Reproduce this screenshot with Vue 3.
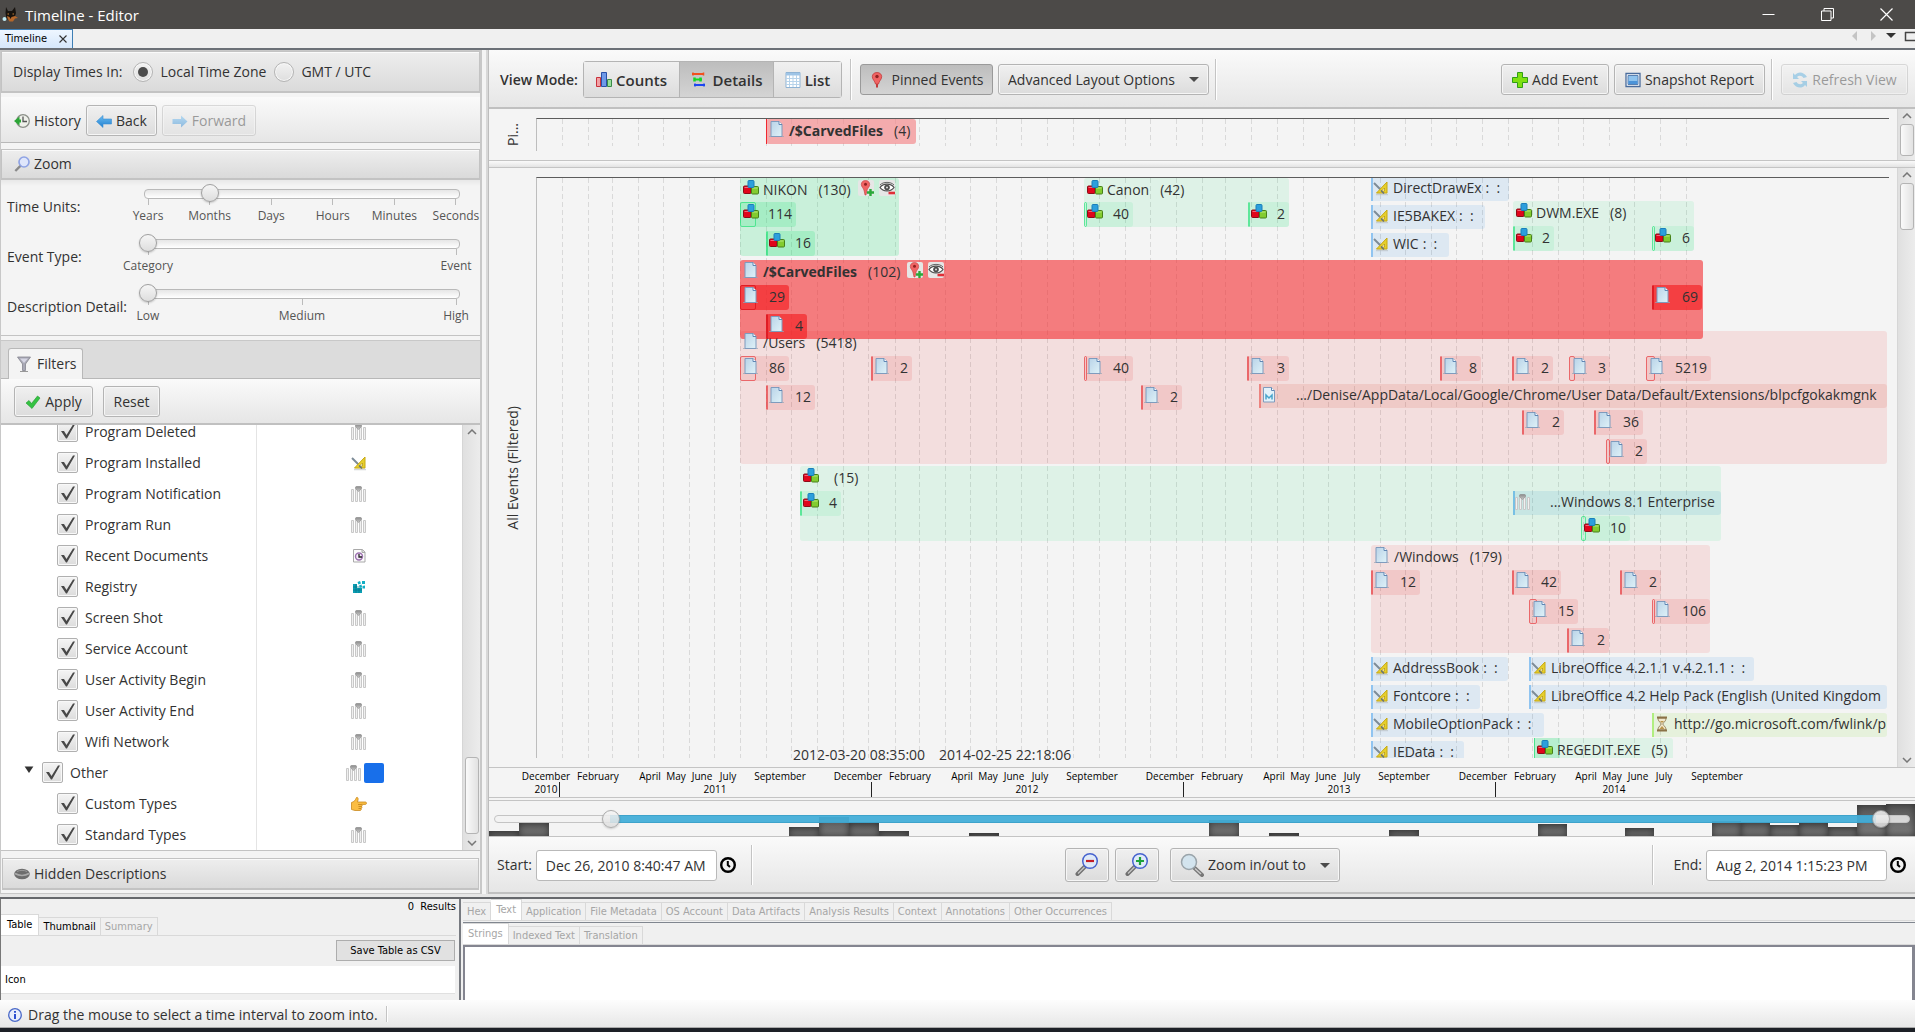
<script setup>
import { ref } from 'vue'

const zone = ref('local')

const sliders = [
  { id: 'units', label: 'Time Units:', max: 5, value: 1, ticks: ['Years', 'Months', 'Days', 'Hours', 'Minutes', 'Seconds'] },
  { id: 'etype', label: 'Event Type:', max: 1, value: 0, ticks: ['Category', 'Event'] },
  { id: 'detail', label: 'Description Detail:', max: 2, value: 0, ticks: ['Low', 'Medium', 'High'] },
]

const filters = [
  { name: 'Program Deleted', icon: 'generic' },
  { name: 'Program Installed', icon: 'tools' },
  { name: 'Program Notification', icon: 'generic' },
  { name: 'Program Run', icon: 'generic' },
  { name: 'Recent Documents', icon: 'recent' },
  { name: 'Registry', icon: 'registry' },
  { name: 'Screen Shot', icon: 'generic' },
  { name: 'Service Account', icon: 'generic' },
  { name: 'User Activity Begin', icon: 'generic' },
  { name: 'User Activity End', icon: 'generic' },
  { name: 'Wifi Network', icon: 'generic' },
  { name: 'Other', icon: 'generic', root: true },
  { name: 'Custom Types', icon: 'hand' },
  { name: 'Standard Types', icon: 'generic' },
]

// month boundaries, measured from the left edge of the plot
const gridLines = [
  25, 51, 75, 101, 126, 152, 177, 203, 229, 254, 280, 306, 331, 358, 382, 408, 433, 459, 484, 510, 536, 562, 588, 613,
  639, 665, 688, 714, 740, 766, 791, 817, 843, 868, 894, 919, 945, 971, 995, 1021, 1046, 1072, 1097, 1123, 1149,
]

const bands = [
  { x: 203, y: 0, w: 159, h: 78, tone: 'green2', icon: 'cubes', label: 'NIKON', count: '(130)', actions: true },
  { x: 547, y: 0, w: 205, h: 49, tone: 'green', icon: 'cubes', label: 'Canon', count: '(42)' },
  { x: 976, y: 23, w: 181, h: 50, tone: 'green', icon: 'cubes', label: 'DWM.EXE', count: '(8)' },
  { x: 203, y: 82, w: 963, h: 79, tone: 'hot', icon: 'page', label: '/$CarvedFiles', count: '(102)', bold: true, actions: true },
  { x: 203, y: 153, w: 1147, h: 133, tone: 'red', icon: 'page', label: '/Users', count: '(5418)' },
  { x: 263, y: 288, w: 921, h: 75, tone: 'green', icon: 'cubes', label: '', count: '(15)' },
  { x: 834, y: 367, w: 339, h: 108, tone: 'red', icon: 'page', label: '/Windows', count: '(179)' },
  { x: 997, y: 560, w: 139, h: 25, tone: 'green', icon: 'cubes', label: 'REGEDIT.EXE', count: '(5)', span: 26 },
]

const chips = [
  { x: 203, y: 24, w: 56, span: 16, n: '114', tone: 'green2', icon: 'cubes' },
  { x: 229, y: 53, w: 49, span: 1, n: '16', tone: 'green2', icon: 'cubes' },
  { x: 547, y: 24, w: 49, span: 3, n: '40', tone: 'green', icon: 'cubes' },
  { x: 711, y: 24, w: 41, span: 1, n: '2', tone: 'green', icon: 'cubes' },
  { x: 976, y: 48, w: 41, span: 1, n: '2', tone: 'green', icon: 'cubes' },
  { x: 1115, y: 48, w: 42, span: 3, n: '6', tone: 'green', icon: 'cubes' },
  { x: 203, y: 107, w: 49, span: 16, n: '29', tone: 'hot', icon: 'page' },
  { x: 229, y: 136, w: 41, span: 1, n: '4', tone: 'hot', icon: 'page' },
  { x: 1115, y: 107, w: 50, span: 2, n: '69', tone: 'hot', icon: 'page' },
  { x: 203, y: 178, w: 49, span: 16, n: '86', tone: 'red', icon: 'page' },
  { x: 334, y: 178, w: 41, span: 2, n: '2', tone: 'red', icon: 'page' },
  { x: 547, y: 178, w: 49, span: 3, n: '40', tone: 'red', icon: 'page' },
  { x: 710, y: 178, w: 42, span: 2, n: '3', tone: 'red', icon: 'page' },
  { x: 903, y: 178, w: 41, span: 2, n: '8', tone: 'red', icon: 'page' },
  { x: 975, y: 178, w: 41, span: 2, n: '2', tone: 'red', icon: 'page' },
  { x: 1032, y: 178, w: 41, span: 6, n: '3', tone: 'red', icon: 'page' },
  { x: 1109, y: 178, w: 65, span: 9, n: '5219', tone: 'red', icon: 'page' },
  { x: 229, y: 207, w: 49, span: 1, n: '12', tone: 'red', icon: 'page' },
  { x: 604, y: 207, w: 41, span: 1, n: '2', tone: 'red', icon: 'page' },
  { x: 985, y: 232, w: 42, span: 2, n: '2', tone: 'red', icon: 'page' },
  { x: 1057, y: 232, w: 49, span: 1, n: '36', tone: 'red', icon: 'page' },
  { x: 1069, y: 261, w: 41, span: 4, n: '2', tone: 'red', icon: 'page' },
  { x: 263, y: 313, w: 41, span: 1, n: '4', tone: 'green', icon: 'cubes' },
  { x: 1044, y: 338, w: 49, span: 5, n: '10', tone: 'green', icon: 'cubes' },
  { x: 834, y: 392, w: 49, span: 2, n: '12', tone: 'red', icon: 'page' },
  { x: 975, y: 392, w: 49, span: 2, n: '42', tone: 'red', icon: 'page' },
  { x: 1083, y: 392, w: 41, span: 1, n: '2', tone: 'red', icon: 'page' },
  { x: 992, y: 421, w: 49, span: 8, n: '15', tone: 'red', icon: 'page' },
  { x: 1115, y: 421, w: 58, span: 3, n: '106', tone: 'red', icon: 'page' },
  { x: 1030, y: 450, w: 42, span: 2, n: '2', tone: 'red', icon: 'page' },
]

const leaves = [
  { x: 834, y: -1, w: 138, text: 'DirectDrawEx', tail: ':  :', tone: 'blue', icon: 'tools' },
  { x: 834, y: 27, w: 114, text: 'IE5BAKEX', tail: ':  :', tone: 'blue', icon: 'tools' },
  { x: 834, y: 55, w: 78, text: 'WIC', tail: ':  :', tone: 'blue', icon: 'tools' },
  { x: 722, y: 206, w: 628, text: '.../Denise/AppData/Local/Google/Chrome/User Data/Default/Extensions/blpcfgokakmgnk', tone: 'coral', icon: 'metadata', wide: true },
  { x: 976, y: 313, w: 208, text: '...Windows 8.1 Enterprise', tone: 'teal', icon: 'generic', wide: true },
  { x: 834, y: 479, w: 137, text: 'AddressBook', tail: ':  :', tone: 'blue', icon: 'tools' },
  { x: 992, y: 479, w: 225, text: 'LibreOffice 4.2.1.1 v.4.2.1.1', tail: ':  :', tone: 'blue', icon: 'tools' },
  { x: 834, y: 507, w: 109, text: 'Fontcore', tail: ':  :', tone: 'blue', icon: 'tools' },
  { x: 992, y: 507, w: 358, text: 'LibreOffice 4.2 Help Pack (English (United Kingdom', tone: 'blue', icon: 'tools' },
  { x: 834, y: 535, w: 173, text: 'MobileOptionPack', tail: ':  :', tone: 'blue', icon: 'tools' },
  { x: 1115, y: 535, w: 235, text: 'http://go.microsoft.com/fwlink/p', tone: 'lime', icon: 'hourglass' },
  { x: 834, y: 563, w: 93, text: 'IEData', tail: ':  :', tone: 'blue', icon: 'tools' },
]

// axis positions are measured from the left edge of the chart pane
const months = [
  [57, 'December'], [109, 'February'], [161, 'April'], [187, 'May'], [213, 'June'], [239, 'July'], [291, 'September'],
  [369, 'December'], [421, 'February'], [473, 'April'], [499, 'May'], [525, 'June'], [551, 'July'], [603, 'September'],
  [681, 'December'], [733, 'February'], [785, 'April'], [811, 'May'], [837, 'June'], [863, 'July'], [915, 'September'],
  [994, 'December'], [1046, 'February'], [1097, 'April'], [1123, 'May'], [1149, 'June'], [1175, 'July'], [1228, 'September'],
]
const years = [[57, '2010'], [226, '2011'], [538, '2012'], [850, '2013'], [1125, '2014']]
const yearTicks = [70, 382, 694, 1006]

const histogram = [
  [0, 30, 5], [30, 30, 14], [300, 30, 9], [330, 30, 19], [360, 30, 13], [390, 30, 5], [480, 30, 3], [720, 30, 16],
  [780, 30, 3], [900, 30, 6], [1049, 29, 12], [1136, 29, 8], [1223, 29, 15], [1252, 29, 14], [1281, 29, 11],
  [1310, 29, 13], [1339, 29, 9], [1368, 29, 31], [1397, 29, 32],
]

const contentTabs = ['Hex', 'Text', 'Application', 'File Metadata', 'OS Account', 'Data Artifacts', 'Analysis Results', 'Context', 'Annotations', 'Other Occurrences']
const textTabs = ['Strings', 'Indexed Text', 'Translation']
const box = (o, h) => ({ left: o.x + 'px', top: o.y + 'px', width: o.w + 'px', height: (h || o.h) + 'px' })
</script>

<template>
  <div class="window">
    <svg class="defs" aria-hidden="true">
      <defs>
        <linearGradient id="gPage" x1="0" y1="0" x2="1" y2="1"><stop offset="0" stop-color="#b9d3e8" /><stop offset="1" stop-color="#dff2f8" /></linearGradient>
        <linearGradient id="gArrow" x1="0" y1="0" x2="0" y2="1"><stop offset="0" stop-color="#6cbcf0" /><stop offset="1" stop-color="#1f7fd0" /></linearGradient>
        <linearGradient id="gGrey" x1="0" y1="0" x2="0" y2="1"><stop offset="0" stop-color="#8a8a8a" /><stop offset="1" stop-color="#c8c8c8" /></linearGradient>
      </defs>
      <symbol id="cubes" viewBox="0 1 16 16">
        <rect x=".5" y="7" width="7.500" height="7.500" rx="1" fill="#e0061c" stroke="#8c0c18" />
        <path d="M1.500 8.500h5" stroke="#f4667a" />
        <rect x="8.500" y="7.500" width="7" height="7.500" rx="1" fill="#83cc30" stroke="#47801a" />
        <path d="M9.500 9h5" stroke="#b6e67c" />
        <rect x="5" y="1.500" width="6" height="7" rx="1" fill="#2c9fdc" stroke="#1b7fba" />
      </symbol>
      <symbol id="page" viewBox="0 0 16 16">
        <path d="M0 15.500h15" stroke="#9aa6b4" opacity=".7" />
        <path d="M2 .5h8l3 3v12H2z" fill="url(#gPage)" stroke="#7f9bbd" />
        <path d="M10 .5v3h3" fill="#fff" stroke="#5f86b4" />
      </symbol>
      <symbol id="metadata" viewBox="0 0 16 16">
        <path d="M2.500.5h8l3 3V15h-11z" fill="#e2f2fa" stroke="#7f9bbd" />
        <path d="M10.500.5v3h3" fill="#fff" stroke="#5f86b4" />
        <path d="M5 12.500V8l3 3 3-3v4.500" fill="none" stroke="#4aa5cc" stroke-width="1.500" />
      </symbol>
      <symbol id="generic" viewBox="0 0 16 16">
        <g fill="#f0f0f0" stroke="#c8c8c8"><path d="M.5 3.500h2v12h-2zM4.500 3.500h2v12h-2zM8.500 3.500h2v12h-2zM12.500 3.500h2v12h-2z" /></g>
        <path d="M4.500 1l.8-.7h4.400l.8.7v1.800l-3 2.700-3-2.700z" fill="url(#gGrey)" stroke="#909090" stroke-width=".6" />
      </symbol>
      <symbol id="tools" viewBox="0 0 16 16">
        <path d="M3 14.500h12" stroke="#b8bcc0" stroke-width="1.500" opacity=".6" />
        <path d="M1 3l9 9" stroke="#7d8b97" stroke-width="2" />
        <path d="M14 2v11H3.500z" fill="#e6cf2c" stroke="#c8a912" />
        <path d="M11.500 8v3H8.500z" fill="#fff" stroke="#b0920c" stroke-width=".7" />
        <path d="M8 10.500l3 3" stroke="#65727d" stroke-width="1.500" />
      </symbol>
      <symbol id="recent" viewBox="0 0 16 16">
        <path d="M2.500 1.500h9l2.500 2.500v10h-11.500z" fill="#fbfbfb" stroke="#a9a9a9" />
        <path d="M11 1.500V4.500h3" fill="#ddd" stroke="#a9a9a9" />
        <circle cx="8" cy="8.500" r="3.500" fill="#f3eaf7" stroke="#9d72b0" stroke-width="1.400" />
        <path d="M8 6v3h3" stroke="#222" fill="none" stroke-width="1.300" />
      </symbol>
      <symbol id="registry" viewBox="0 0 16 16">
        <path d="M2 5h4v4h5v5H2z" fill="#0b9fb4" /><path d="M2 8h9M2 11h9M5 5v9M8 9v5" stroke="#067386" stroke-width=".7" />
        <path d="M6.500 3l2.500-1 1 2.500-2.500 1zM11 2h3v3h-3zM8 6.500l2.500-1 .5 2.500-2 1zM11.500 7l2.500-.5v3h-2.500z" fill="#12aec4" />
      </symbol>
      <symbol id="hand" viewBox="0 0 16 16">
        <path d="M.5 6.500C3 6 4.500 4 5.500 1.500 6.500 1 7.500 2 7 4l-.5 2h8c1.300 0 1.300 2.400 0 2.400H10.500c.9.400.9 1.800 0 2 .7.500.6 1.700-.3 1.900.4.900 0 2-1 2.200H4L.5 13.500z" fill="#fbbd42" stroke="#c98a20" stroke-width=".8" />
        <path d="M7 8.500h3.500M7.500 10.500h3M7.500 12.500h2.500" stroke="#b67815" stroke-width=".7" />
      </symbol>
      <symbol id="hourglass" viewBox="0 0 16 16">
        <path d="M4 2c0 4 3 4 3 6s-3 2-3 6h8c0-4-3-4-3-6s3-2 3-6z" fill="#f1e7cc" stroke="#937f58" />
        <path d="M3 1.500h10M3 14.500h10" stroke="#8a7246" stroke-width="2" /><path d="M6 5h4l-2 2zM5.500 13l2.500-3 2.500 3z" fill="#b8954c" />
      </symbol>
      <symbol id="pin" viewBox="0 0 16 16">
        <path d="M7 9h2v6.500H7z" fill="#c03a3a" />
        <path d="M8 .5c3 0 4.700 2 4.700 4.200C12.700 7.500 10 9 9.500 12h-3C6 9 3.300 7.500 3.300 4.700 3.300 2.500 5 .5 8 .5z" fill="#f06464" stroke="#c23c3c" stroke-width=".8" />
        <circle cx="8" cy="4.500" r="1.700" fill="#8f2222" />
      </symbol>
      <symbol id="pinadd" viewBox="0 0 16 16">
        <rect width="16" height="16" rx="2" fill="#e6e6e6" />
        <path d="M7.500.5c2.700 0 4.200 1.800 4.200 4C11.700 7 9.300 8 8.800 11L8 15H7l-.8-4C5.700 8 3.300 7 3.300 4.500 3.300 2.300 4.800.5 7.500.5z" fill="#f06464" stroke="#c23c3c" stroke-width=".6" />
        <circle cx="7.500" cy="4.200" r="1.500" fill="#8f2222" /><path d="M12.500 9v7M9 12.500h7" stroke="#2aa83a" stroke-width="2.400" />
      </symbol>
      <symbol id="eye" viewBox="0 0 16 16">
        <rect width="16" height="16" rx="2" fill="#e6e6e6" />
        <path d="M1 7.500C4 3 12 3 15 7.500 12 12 4 12 1 7.500z" fill="#fff" stroke="#4a4a4a" stroke-width="1.200" />
        <path d="M1 5C4 1.500 12 1.500 15 5" fill="none" stroke="#666" /><circle cx="8" cy="7.500" r="2.800" fill="#4c4c4c" /><circle cx="8" cy="7.500" r="1" fill="#ddd" />
        <path d="M9.500 13h6.500" stroke="#e02f38" stroke-width="2.600" />
      </symbol>
      <symbol id="lens" viewBox="0 0 24 24">
        <path d="M2.500 22L10 14.500" stroke="#6f6f6f" stroke-width="4" stroke-linecap="round" /><path d="M3 21.500L9.500 15" stroke="#c4c4c4" stroke-width="1.500" />
        <circle cx="15" cy="9" r="7.300" fill="#dfeaf8" stroke="#4763cf" stroke-width="1.500" />
      </symbol>
      <symbol id="clock" viewBox="0 0 16 16"><circle cx="8" cy="8" r="6.800" fill="none" stroke="#000" stroke-width="2.400" /><path d="M7.800 4v4l2.200 2" fill="none" stroke="#000" stroke-width="2" /></symbol>
      <symbol id="up" viewBox="0 0 10 6"><path d="M1 5l4-4 4 4" fill="none" stroke="#777" stroke-width="1.500" /></symbol>
      <symbol id="down" viewBox="0 0 10 6"><path d="M1 1l4 4 4-4" fill="none" stroke="#777" stroke-width="1.500" /></symbol>
    </svg>

    <header class="titlebar">
      <svg class="ic" viewBox="0 0 16 16"><path d="M4 0l2 4h4l3-4 1 6-1.500 5-4 2.500L4.500 12 3.500 6z" fill="#17130f" /><path d="M5 9l2.500 1 1 2 1-2 3.500-1 3 2-3 .5-2 3H7.500l-2-3z" fill="#b5672a" /><path d="M5.500 7H7M10.500 7H12" stroke="#c98238" /><circle cx="2.500" cy="12" r="2" fill="#bfeaf4" /></svg>
      <h1>Timeline - Editor</h1>
      <div class="winbtns">
        <button aria-label="Minimize"><svg viewBox="0 0 13 13"><path d="M.5 6.500h12" stroke="#fff" /></svg></button>
        <button aria-label="Restore"><svg viewBox="0 0 13 13"><path d="M.5 3h9.500v9.500H.5zM3 3V.5h9.500V10H10" fill="none" stroke="#fff" /></svg></button>
        <button aria-label="Close"><svg viewBox="0 0 13 13"><path d="M.5.5l12 12M12.500.5l-12 12" stroke="#fff" stroke-width="1.200" /></svg></button>
      </div>
    </header>

    <div class="docbar">
      <div class="doctab">Timeline <button aria-label="Close tab"><svg viewBox="0 0 8 8"><path d="M.5.5l7 7M7.500.5l-7 7" stroke="#333" stroke-width="1.100" /></svg></button></div>
      <svg class="docnav" viewBox="0 0 64 14"><path d="M6 2v10L1 7z" fill="#c4c4c4" /><path d="M20 2v10l5-5z" fill="#c4c4c4" /><path d="M35 4h10l-5 5z" fill="#333" /><path d="M54 3.500h12M54.500 3v8.500H66" stroke="#444" stroke-width="1.500" fill="none" /></svg>
    </div>

    <main class="body">
      <aside class="side">
        <div class="titled zonebar" role="radiogroup" aria-label="Display Times In">
          <span>Display Times In:</span>
          <label><input v-model="zone" type="radio" name="zone" value="local"> Local Time Zone</label>
          <label><input v-model="zone" type="radio" name="zone" value="utc"> GMT / UTC</label>
        </div>
        <div class="bar history">
          <svg class="ic" viewBox="0 0 16 16"><circle cx="9" cy="8" r="6.300" fill="#eef0ea" stroke="#8b8f88" stroke-width="1.300" /><path d="M9 3.500V8.500h4" fill="none" stroke="#555" stroke-width="1.300" /><path d="M0 8l5.500-4.500v3h1.500v3H5.500v3z" fill="#2ca637" /></svg>
          <span>History</span>
          <button class="btn back"><svg class="ic" viewBox="0 0 16 16"><path d="M.5 8.500L7 2.500v3.500h8.500v5H7v3.500z" fill="url(#gArrow)" stroke="#3a8ed4" stroke-width=".6" /></svg>Back</button>
          <button class="btn fwd" disabled><svg class="ic" viewBox="0 0 16 16"><path d="M15.500 8.500L9 2.500v3.500H.5v5H9v3.500z" fill="url(#gArrow)" /></svg>Forward</button>
        </div>
        <section class="zoom">
          <h2 class="titled"><svg class="ic" viewBox="0 0 24 24"><path d="M2 22.500l8-8" stroke="#8a8a8a" stroke-width="3.500" /><circle cx="15" cy="9" r="7.500" fill="#dfe6fb" stroke="#8fa3e4" stroke-width="2.500" /></svg>Zoom</h2>
          <div class="sliders">
            <div v-for="s in sliders" :key="s.id" class="srow">
              <label :for="s.id">{{ s.label }}</label>
              <div class="scale">
                <input :id="s.id" type="range" min="0" :max="s.max" :value="s.value">
                <div class="ticks"><span v-for="t in s.ticks" :key="t">{{ t }}</span></div>
              </div>
            </div>
          </div>
        </section>
        <section class="filters">
          <div class="ftabs"><button class="ftab"><svg class="ic" viewBox="0 0 16 16"><path d="M1.500 1h13L9.500 8v6.500h-3V8z" fill="#a9a9b6" stroke="#85858f" stroke-width=".8" /><path d="M4 2.500h8L8 7z" fill="#d6d6e4" /><path d="M4 15.500h8" stroke="#999" /></svg>Filters</button></div>
          <div class="bar fbar">
            <button class="btn apply"><svg class="ic" viewBox="0 0 16 16"><path d="M1 9l3-2.500 2.500 3L12.500 2 15 4 7 14.500z" fill="#35c242" stroke="#1d9a2c" stroke-width=".6" /></svg>Apply</button>
            <button class="btn reset">Reset</button>
          </div>
          <div class="tree">
            <ul>
              <li v-for="f in filters" :key="f.name" :class="{ root: f.root }">
                <div class="name">
                  <svg v-if="f.root" class="twist" viewBox="0 0 10 8"><path d="M0 .5h10L5 8z" fill="#333" /></svg>
                  <label><input type="checkbox" checked>{{ f.name }}</label>
                </div>
                <div class="legend"><svg class="ic"><use :href="'#' + f.icon" /></svg><i v-if="f.root" class="swatch" /></div>
              </li>
            </ul>
            <div class="scroll"><svg><use href="#up" /></svg><i class="thumb low" /><svg><use href="#down" /></svg></div>
          </div>
        </section>
        <h2 class="titled hidden"><svg class="ic" viewBox="0 0 16 16"><ellipse cx="8" cy="8" rx="7.800" ry="5.200" fill="#6d6d6d" /><path d="M1 7.500c4 2.500 10 2.500 14 0" stroke="#aaa" fill="none" stroke-width="1.500" /><path d="M3 5.500c3-1.500 7-1.500 10 0" stroke="#999" fill="none" /></svg>Hidden Descriptions</h2>
      </aside>

      <section class="view">
        <div class="bar toolbar">
          <strong>View Mode:</strong>
          <div class="seg">
            <button class="counts"><svg class="ic" viewBox="0 0 16 16"><path d="M.5 5.500h4v9h-4z" fill="#f2a0a4" stroke="#c8323c" /><path d="M5.500.5h5v14h-5z" fill="#6f9ae8" stroke="#2a50a8" /><path d="M11.500 7.500h4v7h-4z" fill="#9adf9c" stroke="#3a8a48" /></svg>Counts</button>
            <button class="details on"><svg class="ic" viewBox="0 0 16 16"><path d="M1 2h12" stroke="#f2501e" stroke-width="2" /><path d="M3 7.500h8" stroke="#12d824" stroke-width="2" /><path d="M3 13h11" stroke="#1c46f0" stroke-width="2" /><path d="M2 .5v3M12.500 .5v3" stroke="#f2501e" stroke-width="1.500" /><path d="M3.500 5.500v4M9.500 5.500v4" stroke="#12d824" stroke-width="2.500" /><path d="M4 11.500v3M13 11.500v3" stroke="#1c46f0" stroke-width="1.500" /></svg>Details</button>
            <button class="list"><svg class="ic" viewBox="0 0 16 16"><path d="M1 .5h14v15H1z" fill="#fff" stroke="#8fb3d4" /><path d="M1 1h14v2.500H1z" fill="#9ec4e6" /><path d="M1 6.500h14M1 9.500h14M1 12.500h14M4.500 3v12M8 3v12M11.500 3v12" stroke="#b7d3ea" /></svg>List</button>
          </div>
          <i class="sep first" />
          <button class="btn pinned on"><svg class="ic"><use href="#pin" /></svg>Pinned Events</button>
          <span class="pick adv"><select aria-label="Advanced Layout Options"><option>Advanced Layout Options</option></select></span>
          <i class="sep" />
          <span class="grow" />
          <button class="btn add"><svg class="ic" viewBox="0 0 16 16"><path d="M5.500.5h5v5h5v5h-5v5h-5v-5h-5v-5h5z" fill="#7fe010" stroke="#2f9e14" /></svg>Add Event</button>
          <button class="btn snap"><svg class="ic" viewBox="0 0 16 16"><path d="M1 1.500h14v13H1z" fill="#fff" stroke="#4a6c9c" stroke-width="1.300" /><path d="M3 3.500h10v9H3z" fill="#8ec3ee" stroke="#5a80b0" /><path d="M3.500 9h9v3h-9z" fill="#4b93d8" /></svg>Snapshot Report</button>
          <i class="sep" />
          <button class="btn refresh" disabled><svg class="ic" viewBox="0 0 16 16"><path d="M1 1v6h6L5 5c2-2 5-1.500 6.500 1L15 5C12-.5 6-1 3 3zM15 15V9H9l2 2c-2 2-5 1.500-6.500-1L1 11c3 5.500 9 6 12 2z" fill="#4fa8da" /></svg>Refresh View</button>
        </div>

        <div class="pane pinpane">
          <div class="vlabel"><span>Pi...</span></div>
          <div class="plot">
            <svg class="grid"><line v-for="g in gridLines" :key="g" :x1="g" :x2="g" y1="0" y2="27" /></svg>
            <div class="band pinband"><i class="edge" /><svg class="ic"><use href="#page" /></svg><b>/$CarvedFiles</b><span class="count">(4)</span></div>
          </div>
          <div class="scroll"><svg><use href="#up" /></svg><i class="thumb short" /></div>
        </div>
        <div class="split" />
        <div class="pane mainpane">
          <div class="vlabel"><span>All Events (Filtered)</span></div>
          <div class="plot">
            <svg class="grid"><line v-for="g in gridLines" :key="g" :x1="g" :x2="g" y1="0" y2="580" /></svg>
            <div v-for="b in bands" :key="b.label" class="band" :class="b.tone" :style="box(b)">
              <i v-if="b.span" class="range" :style="{ width: b.span + 'px' }" />
              <svg class="ic"><use :href="'#' + b.icon" /></svg>
              <component :is="b.bold ? 'b' : 'span'">{{ b.label }}</component><span class="count">{{ b.count }}</span>
              <template v-if="b.actions">
                <button class="act first" aria-label="Pin"><svg class="ic"><use href="#pinadd" /></svg></button>
                <button class="act" aria-label="Hide"><svg class="ic"><use href="#eye" /></svg></button>
              </template>
            </div>
            <div v-for="(c, i) in chips" :key="'c' + i" class="chip" :class="c.tone" :style="box(c, 25)">
              <i class="span" :style="{ width: c.span + 'px' }" />
              <svg class="ic"><use :href="'#' + c.icon" /></svg><span>{{ c.n }}</span>
            </div>
            <div v-for="l in leaves" :key="l.text" class="leaf" :class="[l.tone, { wide: l.wide }]" :style="box(l, 24)">
              <svg class="ic"><use :href="'#' + l.icon" /></svg><span>{{ l.text }}</span><span v-if="l.tail" class="tail">{{ l.tail }}</span>
            </div>
          </div>
          <div class="hover"><span>2012-03-20 08:35:00</span><span>2014-02-25 22:18:06</span></div>
          <div class="scroll"><svg><use href="#up" /></svg><i class="thumb" /><svg><use href="#down" /></svg></div>
        </div>

        <div class="axis">
          <span v-for="m in months" :key="m[0]" class="month" :style="{ left: m[0] + 'px' }">{{ m[1] }}</span>
          <span v-for="y in years" :key="y[1]" class="year" :style="{ left: y[0] + 'px' }">{{ y[1] }}</span>
          <i v-for="t in yearTicks" :key="t" :style="{ left: t + 'px' }" />
        </div>

        <div class="overview">
          <i v-for="h in histogram" :key="h[0]" class="bin" :style="{ left: h[0] + 'px', width: h[1] + 'px', height: h[2] + 'px' }" />
          <div class="track"><i /></div>
          <input class="lo" type="range" min="0" max="1000" value="80" aria-label="Range start">
          <input class="hi" type="range" min="0" max="1000" value="982" aria-label="Range end">
        </div>

        <div class="bar rangebar">
          <label for="start">Start:</label><input id="start" type="text" value="Dec 26, 2010 8:40:47 AM">
          <button class="clock" aria-label="Pick start"><svg><use href="#clock" /></svg></button>
          <i class="sep" />
          <div class="center">
            <button class="btn sq" aria-label="Zoom out"><svg viewBox="0 0 24 24"><use href="#lens" /><path d="M11 9h8" stroke="#c41c24" stroke-width="2.200" /></svg></button>
            <button class="btn sq" aria-label="Zoom in"><svg viewBox="0 0 24 24"><use href="#lens" /><path d="M11 9h8M15 5v8" stroke="#1ca23a" stroke-width="2.200" /></svg></button>
            <span class="pick zoomto"><svg viewBox="0 0 24 24"><path d="M14 14.500l8 7.500" stroke="#777" stroke-width="4" stroke-linecap="round" /><path d="M15 15.500l6 5.500" stroke="#ccc" stroke-width="1.500" /><circle cx="9" cy="9" r="7.500" fill="#d3e4ee" stroke="#9aa4aa" stroke-width="1.500" /></svg><select aria-label="Zoom in/out to"><option>Zoom in/out to</option></select></span>
          </div>
          <i class="sep endsep" />
          <label for="end">End:</label><input id="end" type="text" value="Aug 2, 2014 1:15:23 PM">
          <button class="clock" aria-label="Pick end"><svg><use href="#clock" /></svg></button>
        </div>
      </section>
    </main>

    <div class="lower">
      <section class="results">
        <p>0&nbsp; Results</p>
        <div class="tabs"><button class="on">Table</button><button>Thumbnail</button><button disabled>Summary</button></div>
        <div class="csv"><button>Save Table as CSV</button></div>
        <table><thead><tr><th>Icon</th></tr></thead></table>
      </section>
      <section class="content">
        <div class="tabs"><button v-for="(t, i) in contentTabs" :key="t" disabled :class="{ on: i === 1 }">{{ t }}</button></div>
        <div class="inner">
          <div class="tabs"><button v-for="(t, i) in textTabs" :key="t" disabled :class="{ on: i === 0 }">{{ t }}</button></div>
          <div class="text" />
        </div>
      </section>
    </div>

    <footer class="status">
      <svg viewBox="0 0 14 14"><circle cx="7" cy="7" r="6.300" fill="#e8edfb" stroke="#4a69c8" stroke-width="1.300" /><path d="M7 6v5M7 3v1.800" stroke="#2c4fd0" stroke-width="2" /></svg>
      <span>Drag the mouse to select a time interval to zoom into.</span><i class="sep" />
    </footer>
  </div>
</template>

<style>
body { margin: 0; overflow: hidden; }
</style>

<style scoped>
* { box-sizing: border-box; }
.window { display: flex; flex-direction: column; height: 100vh; background: #f4f4f4; color: #323232; font: 14px/20px "Open Sans", "Noto Sans", sans-serif; white-space: nowrap; }
.defs { position: absolute; width: 0; height: 0; }
button, input, select { font: inherit; color: inherit; margin: 0; }
button { padding: 0; border: 0; background: none; }
h1, h2, p, ul { margin: 0; padding: 0; font: inherit; }
ul { list-style: none; }
.ic { width: 16px; height: 16px; flex: none; display: block; }
.grow { flex: 1; }

.titlebar { flex: none; height: 29px; display: flex; align-items: center; gap: 7px; padding-left: 2px; background: #4c4a48; color: #fff; }
.titlebar h1 { font-size: 15px; }
.winbtns { margin-left: auto; display: flex; padding-right: 22px; gap: 46px; }
.winbtns svg { display: block; width: 13px; height: 13px; }
.docbar { flex: none; height: 21px; display: flex; justify-content: space-between; background: #f0f0f0; border-bottom: 2px solid #6b7077; }
.doctab { display: flex; align-items: center; justify-content: space-between; width: 73px; padding: 0 5px; background: linear-gradient(#eef6ff, #d6e7fb); border: 1px solid #3d7eb4; border-left: 0; border-bottom: 0; color: #000; font: 11px/16px "DejaVu Sans Condensed", "Noto Sans", sans-serif; }
.doctab svg { display: block; width: 8px; height: 8px; }
.docnav { width: 64px; height: 14px; }

.body { flex: 1; min-height: 0; display: flex; border-bottom: 3px solid #e6e6e6; }
.side { flex: none; width: 482px; display: flex; flex-direction: column; border: 1px solid #c8c8c8; border-right-width: 2px; }
.titled { display: flex; align-items: center; border: 1px solid #c3c3c3; border-bottom-width: 2px; background: linear-gradient(#eee, #dadada); box-shadow: inset 0 1px #fafafa; }
.zonebar { flex: none; height: 42px; padding: 0 11px; gap: 11px; }
.zonebar label { display: flex; align-items: center; gap: 7px; }
.zonebar label + label { margin-left: -3px; }
input[type=radio] { appearance: none; width: 20px; height: 20px; border: 1px solid #b4b4b4; border-radius: 50%; background: linear-gradient(#f2f2f2, #dedede); box-shadow: inset 0 0 0 1px #f8f8f8; display: grid; place-items: center; }
input[type=radio]:checked::before { content: ""; width: 10px; height: 10px; border-radius: 50%; background: #4b4b4b; }
.bar { display: flex; align-items: center; background: linear-gradient(#fafafa, #e6e6e6); border-bottom: 1px solid #b8b8b8; }
.history { flex: none; height: 46px; margin-top: 4px; padding: 2px 0 0 13px; }
.history span { flex: none; width: 56px; padding-left: 4px; }
.btn { height: 31px; display: flex; align-items: center; justify-content: center; border: 1px solid #b4b4b4; border-radius: 3px; background: linear-gradient(#f0f0f0, #dcdcdc); box-shadow: inset 0 0 0 1px #f6f6f6; padding: 0 9px; gap: 4px; }
.btn:disabled { opacity: .45; }
.btn.on { background: linear-gradient(#bdbdbd, #d4d4d4); border-color: #9a9a9a; box-shadow: none; }
.back { width: 71px; }
.fwd { width: 94px; margin-left: 5px; }

.zoom { flex: none; margin-top: 6px; border-bottom: 1px solid #c3c3c3; }
.zoom h2 { height: 31px; padding-left: 12px; gap: 4px; }
.sliders { padding: 4px 0 0 6px; height: 155px; background: linear-gradient(#e8e8e8, #f4f4f4 6px); }
.srow { display: flex; height: 50px; }
.srow label { flex: none; width: 132px; padding-top: 13px; }
.scale { position: relative; width: 326px; }
.scale::before { content: ""; position: absolute; left: 5px; right: 5px; top: 5px; height: 8px; border: 1px solid #b9b9b9; border-radius: 4px; background: linear-gradient(#e6e6e6, #fff); }
input[type=range] { appearance: none; display: block; position: relative; width: 100%; height: 18px; background: none; }
input[type=range]::-webkit-slider-thumb { appearance: none; width: 18px; height: 18px; border: 1px solid #a0a0a0; border-radius: 50%; background: linear-gradient(#f6f6f6, #dedede); box-shadow: 0 1px 2px #0003; }
.ticks { display: flex; justify-content: space-between; margin: -3px 9px 0; font-size: 12px; line-height: 18px; color: #555; }
.ticks span { width: 0; display: flex; flex-direction: column; align-items: center; }
.ticks span::before { content: ""; width: 1px; height: 6px; margin-bottom: 2px; background: #bbb; }

.filters { flex: 1; min-height: 0; display: flex; flex-direction: column; margin-top: 4px; border-bottom: 1px solid #c3c3c3; }
.ftabs { display: flex; align-items: flex-end; padding: 7px 0 0 7px; background: #dcdcdc; border-top: 1px solid #c8c8c8; border-bottom: 1px solid #b8b8b8; }
.ftab { display: flex; align-items: center; gap: 5px; width: 75px; height: 31px; padding-left: 7px; background: #f4f4f4; border: 1px solid #b8b8b8; border-bottom: 0; border-radius: 3px 3px 0 0; margin-bottom: -1px; }
.fbar { flex: none; height: 46px; padding: 1px 0 0 13px; gap: 10px; border-bottom: 2px solid #c0c0c0; }
.apply { width: 79px; }
.reset { width: 57px; }
.tree { flex: 1; min-height: 0; display: flex; background: #fff; }
.tree ul { flex: 1; display: flex; flex-direction: column; justify-content: flex-end; overflow: hidden; }
.tree li { flex: none; display: flex; height: 31px; }
.name { position: relative; width: 256px; display: flex; align-items: center; padding-left: 56px; border-right: 1px solid #e4e4e4; }
.root .name { padding-left: 41px; }
.twist { position: absolute; left: 23px; top: 9px; width: 10px; height: 7px; }
.name label { display: flex; align-items: center; gap: 7px; }
input[type=checkbox] { appearance: none; width: 21px; height: 21px; border: 1px solid #b0b0b0; border-radius: 2px; background: linear-gradient(#f4f4f4, #dcdcdc); box-shadow: inset 0 0 0 1px #f8f8f8; }
input[type=checkbox]:checked { background: url("data:image/svg+xml,%3Csvg xmlns='http://www.w3.org/2000/svg' viewBox='0 0 19 19'%3E%3Cpath d='M3 9h3l2.500 4L15 2.500h2L9 16.500H8z' fill='%23484848'/%3E%3C/svg%3E") center / 100% no-repeat, linear-gradient(#f4f4f4, #dcdcdc); }
.legend { flex: 1; display: flex; align-items: center; justify-content: center; gap: 2px; padding-right: 2px; }
.root .legend { padding-left: 12px; }
.swatch { width: 20px; height: 20px; border-radius: 2px; background: #186fea; }
.hidden { flex: none; height: 32px; margin: 7px 1px 3px; padding-left: 11px; gap: 4px; }

.scroll { flex: none; width: 18px; display: flex; flex-direction: column; align-items: center; padding: 4px 0; border-left: 1px solid #d6d6d6; background: linear-gradient(90deg, #e0e0e0, #ececec); }
.scroll svg { flex: none; width: 10px; height: 6px; }
.scroll .thumb { width: 14px; height: 47px; border: 1px solid #b4b4b4; border-radius: 3px; background: linear-gradient(90deg, #fafafa, #e2e2e2); margin: 5px 0 auto; }
.scroll .thumb.low { height: 77px; margin: auto 0 6px; }
.scroll .thumb.short { height: 32px; }

.view { flex: 1; min-width: 0; display: flex; flex-direction: column; margin-left: 6px; border-left: 1px solid #bdbdbd; box-shadow: -2px 0 #d8d8d8; background: #f4f4f4; }
.toolbar { flex: none; height: 59px; padding: 2px 7px 0 11px; border-bottom: 2px solid #c0c0c0; }
.toolbar strong { width: 83px; font-weight: 600; }
.seg { display: flex; height: 37px; font-weight: 600; font-size: 15px; border: 1px solid #b4b4b4; border-radius: 3px; }
.seg button { display: flex; align-items: center; justify-content: center; gap: 4px; background: linear-gradient(#f0f0f0, #dcdcdc); }
.seg button + button { border-left: 1px solid #b4b4b4; }
.seg .on { background: linear-gradient(#bdbdbd, #d4d4d4); }
.counts { width: 95px; }
.seg .details { width: 94px; gap: 6px; }
.list { width: 68px; }
.sep { flex: none; align-self: stretch; width: 2px; margin: 7px 8px 7px 6px; border-left: 1px solid #c4c4c4; border-right: 1px solid #fff; }
.sep.first { margin-left: 8px; }
.pinned { width: 133px; gap: 6px; }
.pick { position: relative; display: flex; align-items: center; }
.pick select { appearance: none; width: 100%; height: 31px; padding: 0 9px; border: 1px solid #b4b4b4; border-radius: 3px; background: linear-gradient(#f0f0f0, #dcdcdc); box-shadow: inset 0 0 0 1px #f6f6f6; }
.pick::after { content: ""; position: absolute; right: 10px; border: 5px solid transparent; border-top-color: #4b4b4b; border-bottom: 0; }
.adv { width: 211px; margin-left: 5px; }
.add { width: 108px; }
.snap { width: 151px; margin-left: 5px; }
.refresh { width: 127px; }

.pane { position: relative; display: flex; }
.pinpane { flex: none; height: 51px; }
.mainpane { flex: 1; min-height: 0; border-bottom: 1px solid #c4c4c4; }
.vlabel { flex: none; width: 47px; display: flex; align-items: center; justify-content: center; }
.vlabel span { writing-mode: vertical-rl; transform: rotate(180deg); }
.plot { position: relative; flex: 1; margin: 9px 8px 9px 0; border-top: 1px solid #5c5c5c; border-left: 1px solid #bdbdbd; overflow: hidden; }
.grid { position: absolute; inset: 0; width: 100%; height: 100%; }
.grid line { stroke: #d9d9d9; stroke-width: 1; stroke-dasharray: 5 3; transform: translateX(.5px); }
.split { flex: none; height: 8px; border: 1px solid #c4c4c4; border-width: 1px 0; background: linear-gradient(#fafafa, #e4e4e4); }
.band { position: absolute; display: flex; height: 25px; padding: 2px 3px 0; border-radius: 3px; }
.band .ic { position: relative; margin-right: 4px; }
.band b { font-weight: 700; }
.band > span, .band > b { position: relative; }
.band .count { margin-left: 11px; }
.band .act { align-self: flex-start; margin-left: 5px; }
.band .act.first { margin-left: 7px; }
.band .act .ic { margin: 0; }
.band .range { position: absolute; left: 0; top: 0; bottom: 0; background: #1de07233; border-left: 1px solid #4be28c; }
.pinband { left: 229px; top: 0; width: 150px; background: #f48a8cb0; }
.edge { position: absolute; left: 0; top: 0; bottom: 0; width: 1px; background: #f02830; }
.chip { position: absolute; display: flex; justify-content: space-between; padding: 2px 4px 0 3px; border-radius: 3px; }
.chip .ic, .chip span { position: relative; }
.chip .span { position: absolute; left: 0; top: 0; bottom: 0; box-sizing: border-box; border: 1px solid; border-radius: 2px; }
.green { background: #1de0721a; }
.green2 { background: #1de07233; }
.chip.green .span, .chip.green2 .span { border-color: #1de072a0; }
.red { background: #e6181819; }
.chip.red { background: #e60a0a1a; }
.chip.red .span { border-color: #e63c40b0; }
.band.hot { background: #f42c2f99; }
.chip.hot { background: #f4181a99; }
.chip.hot .span { border-color: #e01c24; }
.leaf { position: absolute; display: flex; align-items: center; gap: 4px; padding: 0 0 2px; border-left: 2px solid; border-radius: 0 3px 3px 0; overflow: hidden; white-space: pre; }
.leaf.wide { gap: 19px; }
.leaf .ic { flex: none; }
.blue { background: #187ce01a; border-color: #90c4f0; }
.coral { background: #dc5a4626; border-color: #ec8480; }
.teal { background: #0082c41a; border-color: #78c0e4; }
.lime { background: #78dc1e1c; border-color: #b0ee80; }
.hover { position: absolute; left: 304px; bottom: 2px; display: flex; gap: 14px; }

.axis { position: relative; flex: none; height: 30px; border-bottom: 1px solid #c4c4c4; color: #000; font-size: 10px; line-height: 14px; }
.axis span { position: absolute; top: 1px; transform: translateX(-50%); }
.axis .year { top: 14px; }
.axis i { position: absolute; bottom: 0; width: 1px; height: 15px; background: #222; }
.overview { position: relative; flex: none; height: 37px; margin-top: 2px; border-top: 1px solid #c4c4c4; border-bottom: 1px solid #c4c4c4; }
.bin { position: absolute; bottom: 0; background: linear-gradient(#555, #7c7c7c); box-shadow: inset 0 0 7px #333; }
.track { position: absolute; left: 5px; right: 5px; top: 14px; height: 8px; border: 1px solid #c4c4c4; border-radius: 4px; background: #f2f2f2cc; }
.track i { position: absolute; left: 115px; right: 33px; top: -1px; height: 8px; background: #0094cfae; }
.overview input { position: absolute; left: 0; top: 9px; width: 100%; pointer-events: none; opacity: .85; }

.rangebar { flex: none; height: 57px; padding: 1px 9px 0 8px; border-bottom: 2px solid #c0c0c0; }
.rangebar input { flex: none; width: 181px; height: 31px; margin: 0 3px 0 4px; padding: 0 9px; border: 1px solid #b9b9b9; border-radius: 3px; background: #fff; outline: 0; }
.rangebar label { flex: none; }
.clock svg { display: block; width: 16px; height: 16px; }
.rangebar .sep { margin: 7px 0 7px 15px; }
.rangebar .endsep { margin: 7px 19px 7px 0; }
.center { flex: 1; display: flex; justify-content: center; gap: 6px; }
.center .btn, .center select { height: 34px; }
.sq { width: 44px; }
.sq svg { width: 24px; height: 24px; flex: none; margin-bottom: 2px; }
.zoomto { width: 170px; margin-left: 5px; }
.zoomto svg { position: absolute; left: 10px; width: 24px; height: 24px; pointer-events: none; }
.zoomto select { padding-left: 37px; }

.lower { flex: none; display: flex; height: 103px; border-top: 2px solid #66686c; background: #f0f0f0; color: #000; font: 11px/15px "DejaVu Sans Condensed", "Noto Sans", sans-serif; }
.results { flex: none; width: 459px; padding-right: 3px; border-left: 1px solid #777; }
.results p { height: 15px; text-align: right; }
.results table { width: 454px; border-collapse: collapse; background: #fff; border-bottom: 1px solid #e0e0e0; }
.results th { height: 27px; padding: 0 4px; font-weight: 400; text-align: left; }
.tabs { display: flex; align-items: flex-end; height: 22px; border-bottom: 1px solid #d9d9d9; }
.tabs button { height: 18px; padding: 0 4px; border: 1px solid #d9d9d9; border-left: 0; border-bottom: 0; }
.tabs button:disabled { color: #a6a6a6; }
.tabs .on { height: 21px; background: #fff; padding: 0 6px 2px; }
.csv { display: flex; justify-content: flex-end; padding: 4px 1px 5px; }
.csv button { width: 119px; height: 21px; border: 1px solid #adadad; background: #e1e1e1; }
.content { flex: 1; min-width: 0; display: flex; flex-direction: column; padding-left: 2px; border-left: 2px solid #777a80; }
.content .on { padding: 0 5px 2px; }
.inner { flex: 1; display: flex; flex-direction: column; border-top: 1px solid #80868f; margin-top: 1px; }
.text { flex: 1; background: #fff; border: 2px solid #848590; border-bottom: 0; border-right-width: 3px; }
.status { flex: none; height: 32px; display: flex; align-items: center; gap: 6px; padding: 2px 0 0 8px; background: linear-gradient(#fdfdfd, #e6e6e6); border-bottom: 4px solid #1d2026; box-shadow: inset 0 -1px #aaa; }
.status svg { width: 14px; height: 14px; }
.status .sep { margin: 4px 2px 6px; }
</style>
